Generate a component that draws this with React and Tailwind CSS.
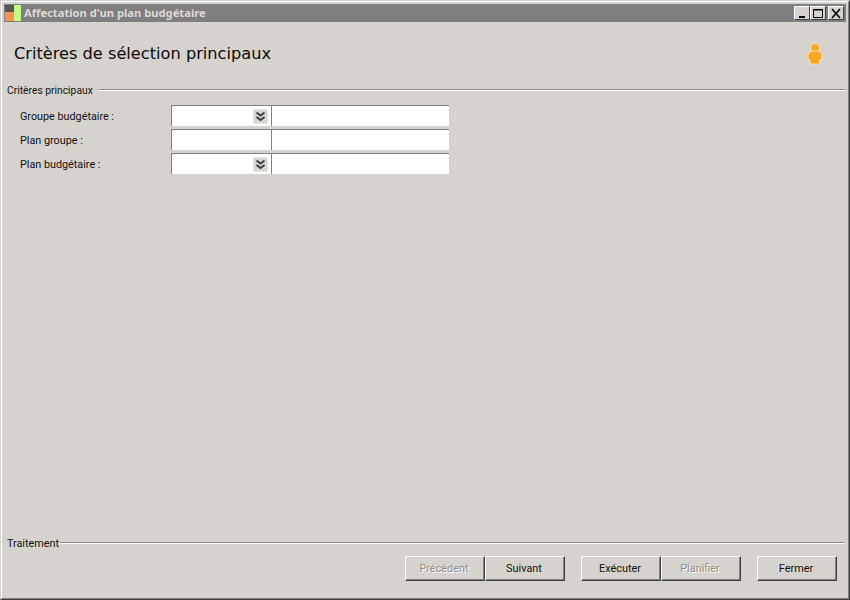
const font = { fontFamily: 'Roboto, "Liberation Sans", Arial, sans-serif' };

function WinBtn({ children, className = "" }) {
  return (
    <div className={`w-[16px] h-[14px] bg-[#d6d3ce] border border-t-white border-l-white border-r-[#404040] border-b-[#404040] flex items-center justify-center ${className}`}>
      <svg width="12" height="11" viewBox="0 0 12 11">{children}</svg>
    </div>
  );
}

function Chevron() {
  return (
    <div className="w-[15px] h-[15px] mr-[3px] bg-[#d9d7d2] rounded-[2px] border border-[#e6e4df] flex items-center justify-center">
      <svg width="11" height="11" viewBox="0 0 11 11" fill="none" stroke="#3a3a3a" strokeWidth="1.800">
        <path d="M1.500 1.500l4 3 4-3" />
        <path d="M1.500 6l4 3 4-3" />
      </svg>
    </div>
  );
}

function Field({ className = "", combo }) {
  return (
    <div className={`h-[21px] bg-white border-t border-l border-t-[#808080] border-l-[#808080] flex items-center justify-end ${className}`}>
      {combo && <Chevron />}
    </div>
  );
}

function Row({ label, combo }) {
  return (
    <div className="flex h-[21px] items-center">
      <div className="w-[151px] pt-[3px] text-[10.800px] text-[#111]">{label}</div>
      <Field className="w-[100px]" combo={combo} />
      <Field className="w-[178px]" />
    </div>
  );
}

function Btn({ children, disabled, className = "" }) {
  return (
    <button className={`w-[80px] h-[25px] pt-[1px] pr-[2px] bg-[#d6d3ce] border border-t-white border-l-white border-r-[#404040] border-b-[#404040] shadow-[inset_-1px_-1px_0_#808080] text-[10.900px] ${disabled ? "text-[#8f8d88] [text-shadow:1px_1px_0_#fff]" : "text-[#111]"} ${className}`}>
      {children}
    </button>
  );
}

function Legend({ label, className = "", lineClass = "", textClass = "" }) {
  return (
    <div className={`flex items-center h-[14px] ${className}`}>
      <span className={`pt-[2px] text-[#111] leading-[14px] ${textClass}`}>{label}</span>
      <div className={`flex-1 h-[2px] bg-[#8e8c88] border-b border-b-white ${lineClass}`} />
    </div>
  );
}

export default function App() {
  return (
    <div style={font} className="w-[850px] h-[600px] bg-[#d6d3ce] border-t border-l border-t-[#d6d3ce] border-l-[#d6d3ce] border-r border-b border-r-[#404040] border-b-[#404040] overflow-hidden">
      <div className="h-full border-t border-l border-t-white border-l-white border-r border-b border-r-[#808080] border-b-[#808080] p-[2px] flex flex-col">
        <div className="h-[18px] shrink-0 bg-[#807e7f] flex items-center">
          <svg width="17" height="18" viewBox="0 0 17 18" className="shrink-0">
            <rect x="0" y="0" width="17" height="18" fill="#807e7f" />
            <rect x="1" y="1" width="9" height="7" fill="#565656" />
            <rect x="1" y="8" width="9" height="9" fill="#f49354" />
            <rect x="10" y="1" width="7" height="16" fill="#bdfb84" />
          </svg>
          <span className="ml-[3px] text-[11.200px] font-bold text-[#dcdad5]" style={{ fontFamily: '"Noto Sans", sans-serif' }}>
            Affectation d'un plan budgétaire
          </span>
          <div className="ml-auto mr-[2px] flex">
            <WinBtn><rect x="3" y="8" width="6" height="2" fill="#000" /></WinBtn>
            <WinBtn><path d="M1.500 1.500h9v8h-9z M1 2h10" fill="none" stroke="#000" /></WinBtn>
            <WinBtn className="ml-[2px]"><path d="M2 1l8 9M10 1l-8 9" stroke="#000" strokeWidth="1.600" fill="none" /></WinBtn>
          </div>
        </div>
        <div className="h-[61px] shrink-0 flex items-center pt-[3px] pl-[10px] pr-[22px]">
          <h1 className="text-[16.200px] text-[#0a0a0a]" style={{ fontFamily: '"DejaVu Sans", sans-serif' }}>
            Critères de sélection principaux
          </h1>
          <svg width="16" height="22" viewBox="0 0 16 22" className="ml-auto mr-[1px]">
            <circle cx="8" cy="5" r="4.500" fill="#f7a823" stroke="#fff3d0" strokeWidth="0.700" />
            <path d="M4 8h8l3 3.500v5l-2.500 0.500V21H3v-4l-2-.5v-5z" fill="#f7a823" stroke="#fff3d0" strokeWidth="0.700" />
          </svg>
        </div>
        <Legend label="Critères principaux" className="ml-[3px] mr-[1px]" lineClass="ml-[6px]" textClass="text-[10.300px]" />
        <div className="pl-[16px] pt-[8px] flex flex-col gap-[3px]">
          <Row label="Groupe budgétaire :" combo />
          <Row label="Plan groupe :" />
          <Row label="Plan budgétaire :" combo />
        </div>
        <div className="flex-1" />
        <Legend label="Traitement" className="ml-[3px] mr-[1px]" lineClass="ml-[1px]" textClass="text-[10.800px]" />
        <div className="h-[46px] shrink-0 flex items-start justify-end pt-[6px] pr-[9px]">
          <Btn disabled>Précédent</Btn>
          <Btn>Suivant</Btn>
          <Btn className="ml-[16px]">Exécuter</Btn>
          <Btn disabled>Planifier</Btn>
          <Btn className="ml-[16px]">Fermer</Btn>
        </div>
      </div>
    </div>
  );
}
